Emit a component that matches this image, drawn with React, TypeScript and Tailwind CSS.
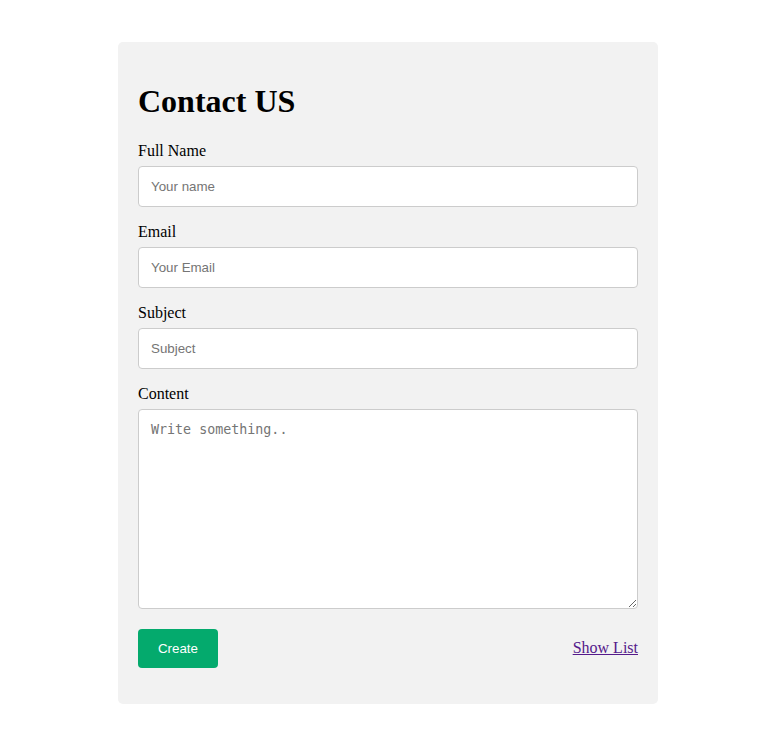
import React from "react";

export default function App() {
  const inputCls =
    "block w-full h-[41px] mt-[6px] mb-[16px] px-[12px] border border-[#ccc] rounded-[4px] bg-white text-[13.33px] text-black placeholder:text-[#757575] outline-none [font-family:'Liberation_Sans',Arial,sans-serif]";
  return (
    <div className="min-h-[737px] bg-white pt-[42px] pl-[118px] [font-family:'Liberation_Serif','Times_New_Roman',serif] text-black">
      <div className="w-[540px] h-[662px] bg-[#f2f2f2] rounded-[5px] px-[20px] pt-[20px]">
        <h1 className="text-[32px] font-bold leading-[37px] mt-[21px] mb-[22px]">Contact US</h1>
        <label className="block text-[16px] leading-[18px]">Full Name</label>
        <input className={inputCls} placeholder="Your name" />
        <label className="block text-[16px] leading-[18px]">Email</label>
        <input className={inputCls} placeholder="Your Email" />
        <label className="block text-[16px] leading-[18px]">Subject</label>
        <input className={inputCls} placeholder="Subject" />
        <label className="block text-[16px] leading-[18px]">Content</label>
        <textarea
          className="block w-full h-[200px] mt-[6px] p-[12px] border border-[#ccc] rounded-[4px] bg-white text-[13.33px] leading-[16px] placeholder:text-[#757575] outline-none resize-y [font-family:'DejaVu_Sans_Mono',monospace]"
          placeholder="Write something.."
        />
        <div className="flex items-center justify-between mt-[20px]">
          <button className="w-[80px] h-[39px] bg-[#04aa6d] text-white rounded-[4px] text-[13.33px] [font-family:'Liberation_Sans',Arial,sans-serif]">
            Create
          </button>
          <a href="#" className="mb-[2px] text-[16px] text-[#551a8b] underline">
            Show List
          </a>
        </div>
      </div>
    </div>
  );
}
